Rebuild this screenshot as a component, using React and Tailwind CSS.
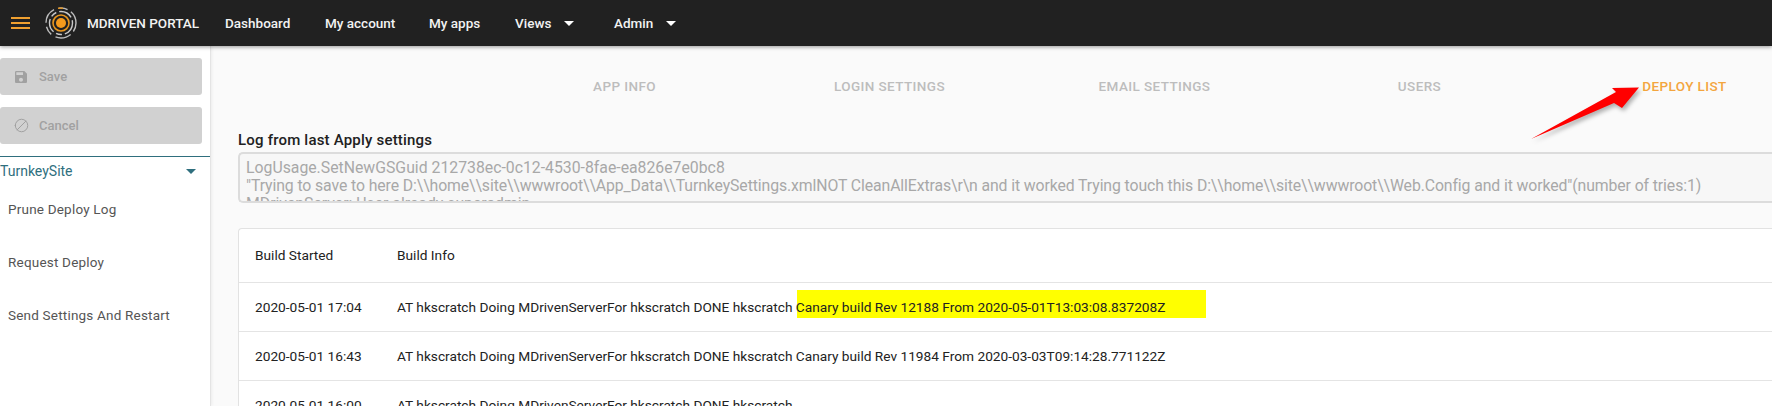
import React from "react";
import { Ban } from "lucide-react";

const NAV = [
  { label: "Dashboard", className: "ml-[25px] w-[100px]" },
  { label: "My account", className: "w-[104px]" },
  { label: "My apps", className: "w-[86px]" },
  { label: "Views", caret: true, className: "w-[99px]" },
  { label: "Admin", caret: true, className: "" },
];

const TABS = ["APP INFO", "LOGIN SETTINGS", "EMAIL SETTINGS", "USERS", "DEPLOY LIST"];

const ACTIONS = ["Prune Deploy Log", "Request Deploy", "Send Settings And Restart"];

const BUILDS = [
  {
    started: "2020-05-01 17:04",
    info: "AT hkscratch Doing MDrivenServerFor hkscratch DONE hkscratch Canary build Rev 12188 From 2020-05-01T13:03:08.837208Z",
    marked: true,
  },
  {
    started: "2020-05-01 16:43",
    info: "AT hkscratch Doing MDrivenServerFor hkscratch DONE hkscratch Canary build Rev 11984 From 2020-03-03T09:14:28.771122Z",
  },
  {
    started: "2020-05-01 16:00",
    info: "AT hkscratch Doing MDrivenServerFor hkscratch DONE hkscratch",
  },
];

const Caret = ({ className }) => (
  <span className={`inline-block h-0 w-0 border-x-[5px] border-t-[5px] border-x-transparent ${className}`} />
);

const Logo = () => (
  <svg width="36" height="36" viewBox="0 0 36 36" fill="none" className="ml-[13px] shrink-0">
    <circle cx="18" cy="18" r="5" fill="#f59a1c" />
    <circle cx="18" cy="18" r="8" stroke="#e8961f" strokeWidth="1.6" />
    <circle cx="18" cy="18" r="11.5" stroke="#c9c9c9" strokeWidth="1.4" strokeDasharray="14 3 6 3" />
    <circle cx="18" cy="18" r="15" stroke="#bdbdbd" strokeWidth="1.4" strokeDasharray="9 4 16 5" />
    <path d="M15 3.3a15 15 0 0 1 5 0" stroke="#e8961f" strokeWidth="1.4" />
  </svg>
);

const SideButton = ({ icon, label }) => (
  <button className="flex h-[37px] w-[202px] items-center rounded-[3px] bg-[#d1d1d1] pl-[13px] text-[13px] font-medium text-[#a1a1a1]">
    <span className="flex w-[16px] justify-center">{icon}</span>
    <span className="ml-[10px]">{label}</span>
  </button>
);

const App = () => {
  return (
    <div className="relative flex h-[406px] w-[1772px] flex-col overflow-hidden bg-[#fafafa] font-['Roboto',sans-serif]">
      <header className="z-10 flex h-[46px] shrink-0 items-center bg-[#212121] shadow-[0_1px_4px_rgba(0,0,0,0.4)]">
        <div className="ml-[11px] flex w-[19px] flex-col gap-[3px]">
          <span className="h-[2px] bg-[#f0a030]" />
          <span className="h-[2px] bg-[#f0a030]" />
          <span className="h-[2px] bg-[#f0a030]" />
        </div>
        <Logo />
        <span className="ml-[8px] w-[113px] text-[13.5px] font-medium whitespace-nowrap text-[#f2f2f2]">MDRIVEN PORTAL</span>
        {NAV.map((item) => (
          <div key={item.label} className={`flex items-center text-[13.5px] font-medium text-[#f2f2f2] ${item.className}`}>
            {item.label}
            {item.caret && <Caret className="ml-[13px] border-t-white" />}
          </div>
        ))}
      </header>

      <div className="flex min-h-0 flex-1">
        <aside className="w-[211px] shrink-0 border-r border-[#e4e4e4] bg-white pt-[12px] shadow-[1px_0_3px_rgba(0,0,0,0.06)]">
          <div className="flex flex-col gap-[12px]">
            <SideButton
              label="Save"
              icon={
                <svg width="16" height="16" viewBox="0 0 24 24" fill="#a1a1a1">
                  <path d="M17 3H5c-1.11 0-2 .9-2 2v14c0 1.1.89 2 2 2h14c1.1 0 2-.9 2-2V7l-4-4zm-5 16c-1.66 0-3-1.34-3-3s1.34-3 3-3 3 1.34 3 3-1.34 3-3 3zm3-10H5V5h10v4z" />
                </svg>
              }
            />
            <SideButton label="Cancel" icon={<Ban size={15} strokeWidth={1.6} color="#a1a1a1" className="-scale-x-100" />} />
          </div>
          <div className="mt-[12px] flex h-[27px] items-center justify-between border-t border-[#2f6f7e] pt-[3px] pr-[14px] text-[14px] text-[#2f6f7e]">
            TurnkeySite
            <Caret className="border-x-[4px] border-t-[4px] border-t-[#2f6f7e]" />
          </div>
          <ul>
            {ACTIONS.map((action) => (
              <li key={action} className="flex h-[53px] items-center pl-[8px] text-[13.5px] tracking-[0.2px] text-[#555]">
                {action}
              </li>
            ))}
          </ul>
        </aside>

        <main className="min-w-0 flex-1 overflow-hidden">
          <nav className="grid h-[84px] grid-cols-[repeat(5,265px)] pb-[3px] pl-[281px]">
            {TABS.map((tab) => (
              <div
                key={tab}
                className={`flex items-center justify-center text-[13.5px] font-medium tracking-[0.4px] whitespace-nowrap ${
                  tab === "DEPLOY LIST" ? "text-[#f3a53e]" : "text-[#bdbdbd]"
                }`}
              >
                {tab}
              </div>
            ))}
          </nav>

          <div className="pl-[27px]">
            <h2 className="text-[15px] leading-[20px] font-medium tracking-[0.2px] text-[#212121]">Log from last Apply settings</h2>
            <div className="mt-[2px] h-[51px] overflow-hidden rounded-l-[5px] border-y-2 border-l-2 border-[#dcdcdc] bg-[#f7f7f7] pt-[5px] pl-[6px] text-[15.8px] leading-[18px] whitespace-nowrap text-[#a8a8a8]">
              <p>LogUsage.SetNewGSGuid 212738ec-0c12-4530-8fae-ea826e7e0bc8</p>
              <p className="tracking-[-0.1px]">"Trying to save to here D:\\home\\site\\wwwroot\\App_Data\\TurnkeySettings.xmlNOT CleanAllExtras\r\n and it worked Trying touch this D:\\home\\site\\wwwroot\\Web.Config and it worked"(number of tries:1)</p>
              <p>MDrivenServer: User already superadmin</p>
            </div>

            <div className="mt-[25px] rounded-tl-[4px] border-t border-l border-[#e2e2e2] bg-white text-[13.7px] text-[#222]">
              <div className="flex h-[54px] items-center border-b border-[#e4e4e4]">
                <span className="w-[158px] pl-[16px]">Build Started</span>
                <span>Build Info</span>
              </div>
              {BUILDS.map((build) => (
                <div key={build.started} className="relative flex h-[49px] items-center border-b border-[#e4e4e4]">
                  <span className="w-[158px] pl-[16px]">{build.started}</span>
                  {build.marked && (
                    <span className="absolute top-[7px] left-[558px] h-[28px] w-[409px] bg-[#ffff00]" />
                  )}
                  <span className="relative whitespace-nowrap">{build.info}</span>
                </div>
              ))}
            </div>
          </div>
        </main>
      </div>

      <svg
        width="125"
        height="70"
        viewBox="0 0 125 70"
        className="absolute top-[80px] left-[1525px] drop-shadow-[2px_3px_2px_rgba(0,0,0,0.3)]"
      >
        <path d="M6 59 L89 23 L97 28 L114 7.5 L87 8 L91 12 Z" fill="#ff0000" />
      </svg>
    </div>
  );
};

export default App;
